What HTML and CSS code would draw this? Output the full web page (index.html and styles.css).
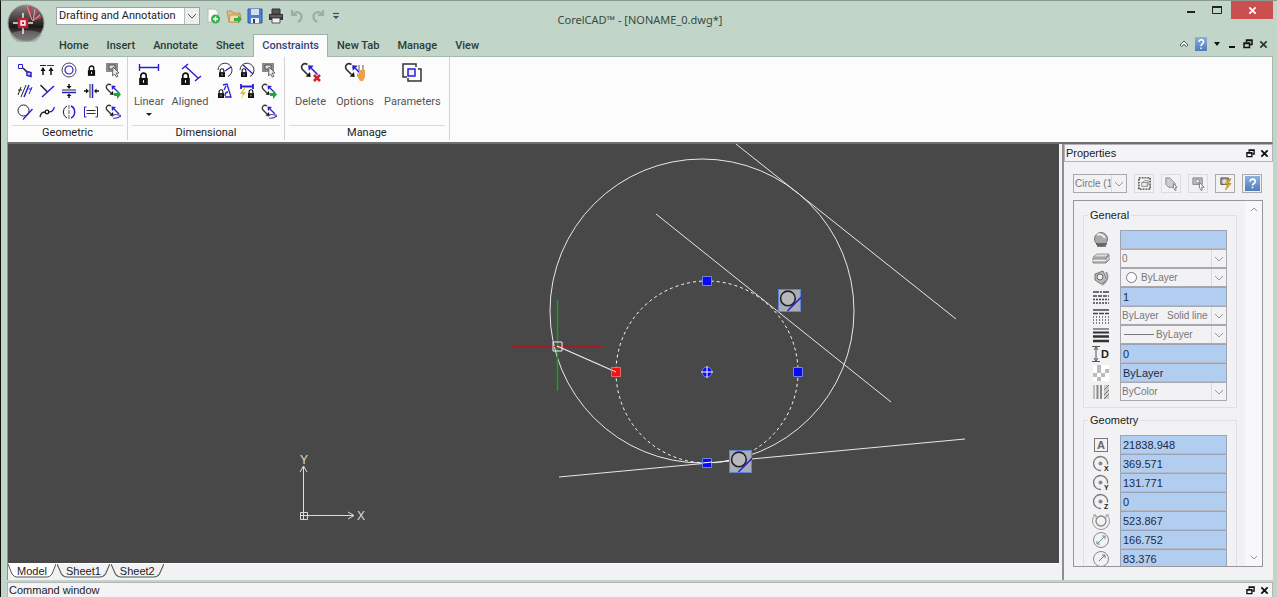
FILE: index.html
```
<!DOCTYPE html>
<html lang="en">
<head>
  <meta charset="UTF-8">
  <meta name="viewport" content="width=device-width, initial-scale=1.0">
  <title>CorelCAD</title>
  <link rel="stylesheet" href="styles.css">
</head>
<body>
  <!-- shared icon parts -->
  <svg class="defs" width="0" height="0">
    <defs>
      <linearGradient id="ball" x1="0" y1="0" x2="0" y2="1">
        <stop offset="0" stop-color="#8b8585"/>
        <stop offset="0.45" stop-color="#3a3434"/>
        <stop offset="0.6" stop-color="#1c1919"/>
        <stop offset="1" stop-color="#777272"/>
      </linearGradient>
      <linearGradient id="help" x1="0" y1="0" x2="0" y2="1">
        <stop offset="0" stop-color="#8fb0de"/>
        <stop offset="1" stop-color="#4f7bbd"/>
      </linearGradient>
      <symbol id="lock" viewBox="0 0 10 12">
        <path d="M2.5 6V3.5a2.5 2.5 0 0 1 5 0V6" fill="none" stroke="#111" stroke-width="1.5"/>
        <path d="M1 5.5h8V12H1z" fill="#111"/>
        <path d="M4.5 7.5h1v2.5h-1z" fill="#fff"/>
      </symbol>
      <symbol id="chain" viewBox="0 0 16 16">
        <path d="M6 2C3 0 0 3 2 6l4 4" fill="none" stroke="#333" stroke-width="1.3"/>
        <path d="M8.500 12L4.500 11.500 8 8z" fill="#111"/>
        <path d="M6.500 2.500l4.500 .5L7 7z" fill="#2a1fd0"/>
        <path d="M9 5l5 5" stroke="#2a1fd0" stroke-width="1.3"/>
      </symbol>
      <symbol id="hide" viewBox="0 0 16 16">
        <path d="M1 1h12v9H1z" fill="#8a8a8a"/>
        <path d="M4 3h6v4H4z" fill="#ddd" stroke="#555"/>
        <path d="M8 5l6 6-3 .2 2 3-1.500 1-2-3.200-2 2z" fill="#eee" stroke="#666"/>
      </symbol>
      <symbol id="show" viewBox="0 0 16 16">
        <use href="#chain"/>
        <path d="M9 10h3V7l4 4.500-4 4.500v-3H9z" fill="#21a53c"/>
      </symbol>
      <symbol id="hideall" viewBox="0 0 16 16">
        <use href="#chain"/>
        <path d="M7 12.500c2-3 5-2 9-1M8 14c3 1 6-1 8-2" fill="none" stroke="#4a44a8" stroke-width="1.200"/>
      </symbol>
      <symbol id="restore" viewBox="0 0 10 10">
        <path d="M3.500 3V1h5.500v4.500H7M3 1.500h6" fill="none" stroke="#111" stroke-width="1.500"/>
        <path d="M1 4h5.500v4.500H1zM1 4.500h5" fill="none" stroke="#111" stroke-width="1.500"/>
      </symbol>
      <symbol id="close" viewBox="0 0 10 10">
        <path d="M1.500 1.500l7 7M8.500 1.500l-7 7" stroke="currentColor" stroke-width="2"/>
      </symbol>
      <symbol id="orbit" viewBox="0 0 18 18">
        <path d="M15.500 9.500A7 7 0 1 0 9 15.500" fill="none" stroke="#777" stroke-width="1.300"/>
        <circle cx="8.500" cy="8.500" r="2" fill="#888"/>
      </symbol>
      <symbol id="tangent" viewBox="0 0 22 22">
        <path d="M.5.5h21v21H.5z" fill="#a9adba" stroke="#5f86d0"/>
        <circle cx="9.500" cy="9" r="7" fill="#b9b9bd" stroke="#222" stroke-width="1.500"/>
        <path d="M9 21L22 8" stroke="#2a25c8" stroke-width="1.500"/>
      </symbol>
    </defs>
  </svg>

  <div class="window">
    <header class="titlebar">
      <button class="app-button" aria-label="Application menu">
        <svg width="38" height="38" viewBox="0 0 38 38">
          <circle cx="19" cy="19" r="18" fill="url(#ball)" stroke="#8c9690"/>
          <path d="M19 2l4 12 2-11zM26 4l1 11 4-10zM33 9l-7 8 8-3z" fill="#c2455a"/>
          <path d="M20 2l5 14M28 5l-2 12M33 11l-8 6" stroke="#dfa0a8"/>
          <path d="M3 30a18 18 0 0 0 32 0c-9-5-22-5-32 0" fill="#888" opacity=".5"/>
          <path d="M6 19h20M16 9v21" stroke="#eee" stroke-width="1.500"/>
          <path d="M12 15h8v8h-8z" fill="#eee" stroke="#c01f32" stroke-width="2.500"/>
          <path d="M15 18h2v2h-2z" fill="#c01f32"/>
        </svg>
      </button>
      <div class="quick-access">
        <span class="workspace-select">
          <select aria-label="Workspace"><option>Drafting and Annotation</option></select>
        </span>
        <button aria-label="New"><svg width="16" height="16" viewBox="0 0 16 16"><path d="M3 1h7l3 3v10H3z" fill="#fafafa" stroke="#bbb"/><circle cx="10.500" cy="11" r="4.500" fill="#35b04a"/><path d="M10.500 8.500v5M8 11h5" stroke="#fff" stroke-width="1.500"/></svg></button>
        <button aria-label="Open"><svg width="16" height="16" viewBox="0 0 16 16"><path d="M1 3h5l1 2h7v9H3z" fill="#e2bd7c" stroke="#c09450"/><path d="M4 7h11l-2 7H3z" fill="#f3dcac" stroke="#c09450"/><path d="M8 10h4V7l4 4-4 4v-2H8z" fill="#35b04a"/></svg></button>
        <button aria-label="Save"><svg width="16" height="16" viewBox="0 0 16 16"><path d="M1 1h14v14H1z" fill="#4c7fd0" stroke="#2c58a0"/><path d="M4 1h8v6H4z" fill="#cfe0f6"/><path d="M4 10h8v5H4z" fill="#eee"/><path d="M6 11h2v4H6z" fill="#345"/></svg></button>
        <button aria-label="Print"><svg width="16" height="16" viewBox="0 0 16 16"><path d="M4 1h8v5H4z" fill="#555" stroke="#333"/><path d="M1 6h14v6H1z" fill="#333"/><path d="M4 10h8v5H4z" fill="#f2f2f2" stroke="#555"/><path d="M2 8h12" stroke="#888"/></svg></button>
        <button aria-label="Undo" disabled><svg width="16" height="16" viewBox="0 0 16 16"><path d="M3 2v5h5M3.500 6.500C8 2 13 5 12.500 9c0 3-2 4-3.500 5" fill="none" stroke="#9fada4" stroke-width="2.200"/></svg></button>
        <button aria-label="Redo" disabled><svg width="16" height="16" viewBox="0 0 16 16"><path d="M13 2v5H8M12.500 6.500C8 2 3 5 3.500 9c0 3 2 4 3.500 5" fill="none" stroke="#9fada4" stroke-width="2.200"/></svg></button>
        <button class="more" aria-label="Customize"><svg width="8" height="8" viewBox="0 0 8 8"><path d="M1 1.500h6" stroke="#34506a" stroke-width="1.200"/><path d="M1 4h6L4 7z" fill="#34506a"/></svg></button>
      </div>
      <h1>CorelCAD™ - [NONAME_0.dwg*]</h1>
      <div class="window-buttons">
        <button aria-label="Minimize"><svg width="10" height="10" viewBox="0 0 10 10"><path d="M1 7h8" stroke="#222" stroke-width="2"/></svg></button>
        <button aria-label="Maximize"><svg width="10" height="10" viewBox="0 0 10 10"><path d="M.5 1.500h9v7h-9z" fill="none" stroke="#222"/><path d="M0 2h10" stroke="#222" stroke-width="2"/></svg></button>
        <button class="close" aria-label="Close"><svg width="9" height="9"><use href="#close"/></svg></button>
      </div>
    </header>

    <nav class="tabs">
      <button>Home</button>
      <button>Insert</button>
      <button>Annotate</button>
      <button>Sheet</button>
      <button class="active">Constraints</button>
      <button>New Tab</button>
      <button>Manage</button>
      <button>View</button>
      <div class="doc-buttons">
        <button aria-label="Collapse ribbon"><svg width="10" height="10" viewBox="0 0 10 10"><path d="M1 6l4-4 4 4-1.500 1.500L5 5.500 2.500 7.500z" fill="#fff" stroke="#555"/></svg></button>
        <button aria-label="Help"><svg width="12" height="14" viewBox="0 0 12 14"><path d="M0 0h12v14H0z" fill="url(#help)"/><path d="M4 5c0-3 4.500-3 4.500 0 0 2-2.500 1.800-2.500 4M6 10.500V12" fill="none" stroke="#fff" stroke-width="1.500"/></svg></button>
        <button aria-label="Help menu"><svg width="8" height="8" viewBox="0 0 8 8"><path d="M1 2h6L4 6z" fill="#111"/></svg></button>
        <button aria-label="Minimize document"><svg width="10" height="10" viewBox="0 0 10 10"><path d="M2 8h6" stroke="#111" stroke-width="2"/></svg></button>
        <button aria-label="Restore document"><svg width="10" height="10"><use href="#restore"/></svg></button>
        <button aria-label="Close document"><svg width="9" height="9"><use href="#close"/></svg></button>
      </div>
    </nav>

    <section class="ribbon">
      <div class="group">
        <div class="tools geometric">
          <button aria-label="Coincident"><svg viewBox="0 0 16 16"><path d="M1.500 2.500h4v4h-4z" fill="none" stroke="#2a1fd0"/><path d="M6 6l5 5" stroke="#222" stroke-width="1.500"/><path d="M10 9.500l4 1v4l-4-1z" fill="#b9c6ff" stroke="#2a1fd0" stroke-width="1.500"/></svg></button>
          <button aria-label="Collinear"><svg viewBox="0 0 16 16"><path d="M1 3.500h6" stroke="#222"/><path d="M8 3.500h7" stroke="#2a1fd0"/><path d="M4 13V6M12 13V6" stroke="#111" stroke-width="1.500"/><path d="M1.500 9L4 5l2.500 4zM9.500 9L12 5l2.500 4z" fill="#111"/></svg></button>
          <button aria-label="Concentric"><svg viewBox="0 0 16 16"><circle cx="8" cy="8" r="7" fill="none" stroke="#445"/><circle cx="8" cy="8" r="4" fill="none" stroke="#2a1fd0" stroke-width="1.200"/></svg></button>
          <button aria-label="Fix"><svg viewBox="0 0 16 16"><use href="#lock" x="4" y="3" width="9" height="11"/></svg></button>
          <button aria-label="Hide geometric"><svg><use href="#hide"/></svg></button>
          <button aria-label="Parallel"><svg viewBox="0 0 16 16"><path d="M4 14l5-12" stroke="#222"/><path d="M7 14l5-12" stroke="#2a1fd0" stroke-width="1.500"/><path d="M1 12l3-8M1 7h4" stroke="#222"/><path d="M12 11l3-7M11.500 6H15" stroke="#2a1fd0"/></svg></button>
          <button aria-label="Perpendicular"><svg viewBox="0 0 16 16"><path d="M1.500 2l7 7" stroke="#222" stroke-width="1.500"/><path d="M3 14L15 3" stroke="#2a1fd0" stroke-width="1.500"/></svg></button>
          <button aria-label="Horizontal"><svg viewBox="0 0 16 16"><path d="M1 7h14" stroke="#222"/><path d="M1 9.500h14" stroke="#2a1fd0" stroke-width="1.500"/><path d="M8 1v3M8 12v3" stroke="#111" stroke-width="1.500"/><path d="M5.500 3h5L8 6zM5.500 13h5L8 10.500z" fill="#111"/></svg></button>
          <button aria-label="Vertical"><svg viewBox="0 0 16 16"><path d="M7 1v14" stroke="#222"/><path d="M9.500 1v14" stroke="#2a1fd0" stroke-width="1.500"/><path d="M1 8h3M12 8h4" stroke="#111" stroke-width="1.500"/><path d="M3 5.500v5L6 8zM13.500 5.500v5L11 8z" fill="#111"/></svg></button>
          <button aria-label="Show geometric"><svg><use href="#show"/></svg></button>
          <button aria-label="Tangent"><svg viewBox="0 0 16 16"><circle cx="6.500" cy="6.500" r="5.500" fill="none" stroke="#222"/><path d="M6 15.500L15.500 5" stroke="#2a1fd0" stroke-width="1.300"/></svg></button>
          <button aria-label="Smooth"><svg viewBox="0 0 16 16"><path d="M1 13c1-5 3-5 6-5" fill="none" stroke="#222" stroke-width="1.300"/><path d="M8 8c4 0 6 0 7.500-5" fill="none" stroke="#2a1fd0" stroke-width="1.300"/><circle cx="8" cy="8" r="1.800" fill="#fff" stroke="#111" stroke-width="1.300"/></svg></button>
          <button aria-label="Symmetric"><svg viewBox="0 0 16 16"><path d="M6 2a6 6.500 0 0 0 0 12" fill="none" stroke="#222"/><path d="M10 2a6 6.500 0 0 1 0 12" fill="none" stroke="#2a1fd0" stroke-width="1.500"/><path d="M8 1v14" stroke="#667" stroke-dasharray="4 1"/></svg></button>
          <button aria-label="Equal"><svg viewBox="0 0 16 16"><path d="M3.500 3H1.500v10h2M12.500 3h2v10h-2" fill="none" stroke="#2a1fd0"/><path d="M3.500 6.500h9" stroke="#222"/><path d="M3.500 9.500h9" stroke="#2a1fd0"/></svg></button>
          <button aria-label="Hide all geometric"><svg><use href="#hideall"/></svg></button>
        </div>
        <h2>Geometric</h2>
      </div>

      <div class="group">
        <div class="tools dimensional">
          <button class="big linear">
            <svg width="24" height="24" viewBox="0 0 24 24"><path d="M2.500 3v7M21.500 3v7M3 6.500h18" fill="none" stroke="#2a1fd0" stroke-width="1.400"/><use href="#lock" x="1" y="11" width="11" height="13"/></svg>
            Linear
            <svg class="drop" width="6" height="4" viewBox="0 0 6 4"><path d="M0 0h6L3 3z" fill="#222"/></svg>
          </button>
          <button class="big aligned">
            <svg width="24" height="24" viewBox="0 0 24 24"><path d="M4 8l6-5M17 20l6-5M7 5l13 12" fill="none" stroke="#2a1fd0" stroke-width="1.400"/><use href="#lock" x="2" y="11" width="11" height="13"/></svg>
            Aligned
          </button>
          <div class="mini-grid">
            <button aria-label="Radius"><svg viewBox="0 0 16 16"><path d="M1 8a7 7 0 1 1 10 6.500" fill="none" stroke="#333"/><path d="M8 9l6-4" stroke="#2a1fd0" stroke-width="1.300"/><use href="#lock" x="1" y="6" width="8" height="9"/></svg></button>
            <button aria-label="Diameter"><svg viewBox="0 0 16 16"><path d="M1 8a7 7 0 1 1 10 6.500" fill="none" stroke="#333"/><path d="M4 3l10 9" stroke="#2a1fd0" stroke-width="1.300"/><use href="#lock" x="1" y="6" width="8" height="9"/></svg></button>
            <button aria-label="Hide dimensional"><svg><use href="#hide"/></svg></button>
            <button aria-label="Angular"><svg viewBox="0 0 16 16"><path d="M6 2l4-1 4 13H8M9 3l-2 4M11 9c-2 0-3 2-3 4" fill="none" stroke="#2a1fd0" stroke-width="1.300"/><use href="#lock" x="0" y="6" width="8" height="9"/></svg></button>
            <button aria-label="Convert"><svg viewBox="0 0 16 16"><path d="M2 1v5M14 1v5M2 3.500h12" stroke="#2a1fd0" stroke-width="1.800"/><path d="M5 5l-4 6h3l-2 5 5-7H4l2-4z" fill="#e4c21a"/><use href="#lock" x="8" y="6" width="8" height="9"/></svg></button>
            <button aria-label="Show dimensional"><svg><use href="#show"/></svg></button>
            <button class="last" aria-label="Hide all dimensional"><svg><use href="#hideall"/></svg></button>
          </div>
        </div>
        <h2>Dimensional</h2>
      </div>

      <div class="group">
        <div class="tools manage">
          <button class="big">
            <svg width="24" height="24" viewBox="0 0 24 24"><use href="#chain" x="1" y="1" width="20" height="20"/><path d="M15 14l6 6M21 14l-6 6" stroke="#d81e2a" stroke-width="2.500"/></svg>
            Delete
          </button>
          <button class="big">
            <svg width="24" height="24" viewBox="0 0 24 24"><use href="#chain" x="1" y="1" width="20" height="20"/><path d="M16 4v5M20 4v5" stroke="#aaa" stroke-width="2"/><path d="M14 12l2 1v-4h6v7l-2 4h-3l-3-5z" fill="#eaa14a"/></svg>
            Options
          </button>
          <button class="big">
            <svg width="24" height="24" viewBox="0 0 24 24"><path d="M7 16H3V3h13v3M10 20h11V8h-3M8 17v3h3" fill="none" stroke="#333" stroke-width="1.500"/><path d="M8 8h7v7H8z" fill="#eef" stroke="#2a1fd0" stroke-width="1.500"/></svg>
            Parameters
          </button>
        </div>
        <h2>Manage</h2>
      </div>
    </section>

    <main class="workspace">
      <div class="editor">
        <svg class="drawing" role="img" aria-label="Drawing">
          <g fill="none" stroke="#e8e8e8">
            <circle cx="694" cy="167" r="152"/>
            <circle cx="699" cy="228" r="91" stroke="#fff" stroke-dasharray="3 3"/>
            <path d="M728 0l220 175M648 70l235 188M551 333l406-38"/>
          </g>
          <path d="M504 202.500h92" stroke="#a01c22"/>
          <path d="M549.500 156v91" stroke="#1f9a27" stroke-width="1.500"/>
          <path d="M549 202l59 26" stroke="#eee" stroke-width="1.300"/>
          <path d="M545 198h9v9h-9z" fill="none" stroke="#eee"/>
          <g fill="#0a0af0" stroke="#6d83e6">
            <path d="M694.500 132.500h9v9h-9zM785.500 223.500h9v9h-9zM694.500 314.500h9v9h-9z"/>
            <path d="M603.500 223.500h9v9h-9z" fill="#f01414" stroke="#e66"/>
            <circle cx="699" cy="228" r="5"/>
          </g>
          <path d="M693 228h12M699 222v12M695 319l9-1" stroke="#fff"/>
          <path d="M604 226l4 2" stroke="#eee"/>
          <use href="#tangent" x="770" y="145" width="23" height="23"/>
          <use href="#tangent" x="721" y="306" width="23" height="23"/>
          <g fill="none" stroke="#ddd">
            <path d="M292.500 368.500h7v7h-7zM292 371.500h53M295.500 375v-52"/>
            <path d="M340 368l6 3.500-6 3.500M292 328l3.500-6 3.500 6"/>
          </g>
          <text x="292" y="320">Y</text>
          <text x="349" y="376">X</text>
        </svg>
        <div class="sheets">
          <button class="current">
            <svg viewBox="0 0 48 14" preserveAspectRatio="none"><path d="M0 0l4 10q2 3 5 3h30q3 0 5-3l4-10"/></svg>
            <span>Model</span>
          </button>
          <button>
            <svg viewBox="0 0 48 14" preserveAspectRatio="none"><path d="M0 0l4 10q2 3 5 3h30q3 0 5-3l4-10"/></svg>
            <span>Sheet1</span>
          </button>
          <button>
            <svg viewBox="0 0 48 14" preserveAspectRatio="none"><path d="M0 0l4 10q2 3 5 3h30q3 0 5-3l4-10"/></svg>
            <span>Sheet2</span>
          </button>
        </div>
      </div>

      <aside class="properties">
        <div class="panel-title">
          <h2>Properties</h2>
          <button aria-label="Float panel"><svg width="9" height="9"><use href="#restore"/></svg></button>
          <button aria-label="Close panel"><svg width="9" height="9"><use href="#close"/></svg></button>
        </div>
        <div class="panel-tools">
          <span class="combo"><select aria-label="Selection" disabled><option>Circle (1)</option></select></span>
          <button class="flat" aria-label="Select all"><svg viewBox="0 0 16 16"><path d="M2 2h12v12H2z" fill="none" stroke="#444" stroke-width="1.500" stroke-dasharray="2 1"/><path d="M5 7h6v4H5zM6 7l2-2h4v4l-1 2" fill="none" stroke="#888"/></svg></button>
          <button class="flat" aria-label="Select entities"><svg viewBox="0 0 16 16"><path d="M2 2h4l6 6v4H5L2 9z" fill="#ccc" stroke="#888"/><path d="M10 8l4 4h-2l1 3-1 .5-2-3z" fill="#fff" stroke="#777"/></svg></button>
          <button class="flat" aria-label="Quick select"><svg viewBox="0 0 16 16"><path d="M2 2h10v7H2z" fill="#bbb" stroke="#888"/><circle cx="7" cy="5.500" r="2" fill="#eee" stroke="#888"/><path d="M9 7l5 5h-3l1 3-1 .5-2-3z" fill="#fff" stroke="#777"/></svg></button>
          <button aria-label="Smart select"><svg viewBox="0 0 16 16"><path d="M3 2h8v7H3z" fill="#999" stroke="#555"/><circle cx="7" cy="6" r="2.500" fill="#ddd"/><path d="M12 3L7 9h3l-2 6 6-7h-3l3-5z" fill="#e2b21c" stroke="#8a6c10" stroke-width=".5"/></svg></button>
          <button class="help" aria-label="Panel help"><svg viewBox="0 0 16 16"><path d="M0 0h16v16H0z" fill="url(#help)"/><path d="M5.500 6c0-4 5.500-3 5.500 0 0 2-3 2-3 4M8 11.500V13" fill="none" stroke="#fff" stroke-width="1.800"/></svg></button>
        </div>

        <div class="sheet-box">
          <form class="fields">
            <fieldset>
              <legend>General</legend>
              <div class="row"><label for="hyperlink" aria-label="Hyperlink"><svg viewBox="0 0 18 18"><circle cx="9" cy="8" r="6.500" fill="#aaa" stroke="#777"/><path d="M5 4c3-2 6 0 8 3" fill="none" stroke="#eee" stroke-width="2"/><path d="M4 13h4M8 13h7M5 15h9" stroke="#555" stroke-width="1.500"/></svg></label><input id="hyperlink" type="text"></div>
              <div class="row"><label for="layer" aria-label="Layer"><svg viewBox="0 0 18 18"><path d="M1 7l4-3h12l-3 3z" fill="#ddd" stroke="#999"/><path d="M1 8h13v5H1zM14 8l3-3v5l-3 3" fill="#bbb" stroke="#888"/><path d="M1 10.500h13l3-3" fill="none" stroke="#eee"/></svg></label><span class="combo"><select id="layer" disabled><option>0</option></select></span></div>
              <div class="row"><label for="color" aria-label="Color"><svg viewBox="0 0 18 18"><path d="M3 5l8-3 4 9-6 4-6-4z" fill="#bbb" stroke="#777"/><circle cx="8" cy="8" r="3" fill="#eee" stroke="#666"/><path d="M14 3c3 5 1 10-4 13" fill="none" stroke="#999" stroke-width="2"/></svg></label><span class="combo"><i class="swatch"></i><select id="color" disabled><option>ByLayer</option></select></span></div>
              <div class="row"><label for="scale" aria-label="Line scale"><svg viewBox="0 0 18 18"><path d="M1 4h16" stroke="#444" stroke-width="1.600" stroke-dasharray="6 1 2 1"/><path d="M1 8h16" stroke="#444" stroke-width="1.600" stroke-dasharray="4 1"/><path d="M1 11.500h16M1 15h16" stroke="#444" stroke-width="1.500" stroke-dasharray="2 1"/></svg></label><input id="scale" type="text" value="1"></div>
              <div class="row"><label for="style" aria-label="Line style"><svg viewBox="0 0 18 18"><path d="M1 3h16" stroke="#444" stroke-width="1.500"/><path d="M1 6.500h16" stroke="#444" stroke-width="1.600" stroke-dasharray="5 1"/><path d="M1 10h16M1 13h16M1 16h16" stroke="#555" stroke-width="1.400" stroke-dasharray="1 2"/></svg></label><span class="combo"><select id="style" disabled><option>ByLayer &nbsp; Solid line</option></select></span></div>
              <div class="row"><label for="weight" aria-label="Line weight"><svg viewBox="0 0 18 18"><path d="M1 3h16" stroke="#333" stroke-width="1"/><path d="M1 6.500h16" stroke="#333" stroke-width="2"/><path d="M1 10.500h16M1 15h16" stroke="#333" stroke-width="2.500"/></svg></label><span class="combo"><i class="stroke"></i><select id="weight" disabled><option>ByLayer</option></select></span></div>
              <div class="row"><label for="thickness" class="thickness"><svg viewBox="0 0 8 18"><path d="M0 1.500h8M0 16.500h8M4 2v14" stroke="#555"/><path d="M2 5l2-3 2 3M2 13l2 3 2-3" fill="none" stroke="#555"/></svg>D</label><input id="thickness" type="text" value="0"></div>
              <div class="row"><label for="transparency" aria-label="Transparency"><svg viewBox="0 0 18 18"><path d="M1 1h16v16H1z" fill="#fff"/><path d="M5 1h4v4H5zM13 5h4v4h-4zM1 9h4v4H1zM9 9h4v4H9zM5 5h4v4H5zM5 13h4v4H5z" fill="#bbb"/></svg></label><input id="transparency" type="text" value="ByLayer"></div>
              <div class="row"><label for="plot" aria-label="Print style"><svg viewBox="0 0 18 18"><path d="M2 2v14" stroke="#888"/><path d="M5.500 2v14" stroke="#888" stroke-width="2"/><path d="M9 2v14" stroke="#888" stroke-width="2"/><path d="M12 2h5v14h-5z" fill="#ccc"/><path d="M12 7l5-5M12 12l5-5M12 16l5-5" stroke="#777"/></svg></label><span class="combo"><select id="plot" disabled><option>ByColor</option></select></span></div>
            </fieldset>
            <fieldset>
              <legend>Geometry</legend>
              <div class="row"><label for="area" class="area"><span>A</span></label><input id="area" type="text" value="21838.948"></div>
              <div class="row"><label for="cx" class="axis"><svg><use href="#orbit"/></svg><b>X</b></label><input id="cx" type="text" value="369.571"></div>
              <div class="row"><label for="cy" class="axis"><svg><use href="#orbit"/></svg><b>Y</b></label><input id="cy" type="text" value="131.771"></div>
              <div class="row"><label for="cz" class="axis"><svg><use href="#orbit"/></svg><b>Z</b></label><input id="cz" type="text" value="0"></div>
              <div class="row"><label for="circumference" aria-label="Circumference"><svg viewBox="0 0 18 18"><circle cx="9" cy="9" r="5" fill="none" stroke="#888" stroke-width="1.300"/><path d="M3 3a8.500 8.500 0 1 0 12 0M1 3h3v3M17 3h-3v3" fill="none" stroke="#999"/></svg></label><input id="circumference" type="text" value="523.867"></div>
              <div class="row"><label for="diameter" aria-label="Diameter value"><svg viewBox="0 0 18 18"><circle cx="9" cy="9" r="7.500" fill="none" stroke="#888"/><path d="M5 13l8-8M5 10v3h3M10 5h3v3" fill="none" stroke="#6f8f84"/></svg></label><input id="diameter" type="text" value="166.752"></div>
              <div class="row"><label for="radius" aria-label="Radius value"><svg viewBox="0 0 18 18"><circle cx="9" cy="9" r="7.500" fill="none" stroke="#888"/><path d="M7 11l6-6M10 5h3v3" fill="none" stroke="#777"/></svg></label><input id="radius" type="text" value="83.376"></div>
            </fieldset>
          </form>
          <div class="scroll">
            <svg width="8" height="6" viewBox="0 0 8 6"><path d="M1 5l3-3 3 3"/></svg>
            <svg width="8" height="6" viewBox="0 0 8 6"><path d="M1 1l3 3 3-3"/></svg>
          </div>
        </div>
      </aside>
    </main>

    <footer class="panel-title command">
      <h2>Command window</h2>
      <button aria-label="Float command window"><svg width="9" height="9"><use href="#restore"/></svg></button>
      <button aria-label="Close command window"><svg width="9" height="9"><use href="#close"/></svg></button>
    </footer>
  </div>
</body>
</html>
```
FILE: styles.css
```
* {
  box-sizing: border-box;
}
body {
  margin: 0;
  font-family: "Liberation Sans", Arial, sans-serif;
  font-size: 11px;
  line-height: 14px;
  color: #222;
}
button {
  display: flex;
  align-items: center;
  justify-content: center;
  padding: 0;
  border: none;
  background: none;
  color: inherit;
  font: inherit;
}
h1, h2 {
  margin: 0;
  font-size: 11px;
  font-weight: normal;
}
input, select {
  min-width: 0;
  font: inherit;
}
select {
  appearance: none;
  flex: 1;
  padding: 0;
  border: none;
  background: none;
  color: inherit;
  opacity: 1;
}
svg {
  flex: none;
}
.defs {
  position: absolute;
}
.window {
  display: flex;
  flex-direction: column;
  height: 100vh;
  overflow: hidden;
  padding: 0 4px 0 6px;
  border-top: 1px solid #8a9a90;
  border-left: 1px solid #111;
  background: #c1d6c9;
}
.titlebar, .tabs, .ribbon {
  font-family: Roboto, "Noto Sans", sans-serif;
}

/* title bar */
.titlebar {
  display: grid;
  grid-template-columns: 1fr auto 1fr;
  height: 33px;
  position: relative;
}
.app-button {
  position: absolute;
  left: 0;
  top: 3px;
}
.quick-access {
  display: flex;
  align-items: center;
  gap: 5px;
  height: 29px;
  padding-left: 49px;
}
.quick-access button {
  width: 16px;
}
.quick-access .more {
  width: 10px;
}
.workspace-select {
  display: flex;
  width: 144px;
  height: 18px;
  padding-left: 2px;
  border: 1px solid #9aa39d;
  background: #fff;
  color: #222;
}
.workspace-select::after {
  content: "";
  width: 14px;
  border-left: 1px solid #bbb;
  background: linear-gradient(45deg, transparent 40%, #555 40% 60%, transparent 60%) 3px 6px / 4px 4px no-repeat,
    linear-gradient(-45deg, transparent 40%, #555 40% 60%, transparent 60%) 7px 6px / 4px 4px no-repeat,
    #eee;
}
.titlebar h1 {
  padding-top: 12px;
  font-family: "Noto Sans", sans-serif;
  color: #3b4841;
}
.window-buttons {
  display: flex;
  justify-content: flex-end;
}
.window-buttons button {
  width: 26px;
  height: 18px;
}
.window-buttons .close {
  width: 42px;
  margin-left: 1px;
  background: #c9504f;
  color: #fff;
}

/* ribbon */
.tabs {
  display: flex;
  height: 22px;
  padding-left: 43px;
  color: #2f3a34;
  font-weight: 500;
}
.tabs > button {
  height: 23px;
  padding: 0 8px;
  border: 1px solid transparent;
}
.tabs .active {
  z-index: 1;
  border-color: #9fb0a6;
  border-bottom: none;
  background: #fcfcfd;
  color: #34427c;
}
.doc-buttons {
  display: flex;
  gap: 6px;
  margin-left: auto;
  padding-right: 5px;
  height: 20px;
}
.ribbon {
  display: flex;
  height: 88px;
  border: 1px solid #a9b8af;
  border-bottom: 2px solid #6e6e72;
  background: #fcfcfd;
}
.group {
  display: flex;
  flex-direction: column;
  margin: 0 0 2px;
  border-right: 1px solid #d3d3d6;
}
.tools {
  display: flex;
  flex: 1;
  padding: 2px 3px 0 6px;
  color: #555;
}
.tools svg {
  width: 16px;
  height: 16px;
}
.group h2 {
  height: 15px;
  margin: 0 4px;
  border-top: 1px solid #d9d9dc;
  text-align: center;
  color: #222;
}
.geometric {
  display: grid;
  grid-template-columns: repeat(5, 22px);
  grid-template-rows: repeat(3, 21px);
}
.big {
  flex-direction: column;
  justify-content: flex-start;
  gap: 10px;
  padding: 2px 0 0;
}
.tools .big > svg {
  width: 24px;
  height: 24px;
}
.tools .big > .drop {
  width: 6px;
  height: 4px;
  margin-top: -6px;
}
.dimensional {
  width: 156px;
  padding-left: 0;
}
.linear {
  width: 42px;
}
.aligned {
  width: 40px;
}
.mini-grid {
  display: grid;
  grid-template-columns: repeat(3, 22px);
  grid-template-rows: repeat(3, 21px);
  margin-left: 4px;
}
.mini-grid .last {
  grid-column: 3;
}
.manage {
  gap: 10px;
  padding: 2px 8px 0 10px;
}

/* workspace */
.workspace {
  display: flex;
  flex: 1;
  min-height: 0;
  background: #f2f2f4;
}
.editor {
  display: flex;
  flex: 1;
  flex-direction: column;
  border-left: 1px solid #8d8d90;
}
.drawing {
  flex: 1;
  width: 100%;
  min-height: 0;
  background: #484848;
}
.drawing text {
  fill: #ddd;
  font-size: 12px;
}
.sheets {
  display: flex;
  height: 17px;
  gap: 1px;
  border-top: 1px solid #fff;
}
.sheets button {
  position: relative;
  height: 14px;
  padding: 0 9px;
}
.sheets svg {
  position: absolute;
  inset: 0;
  width: 100%;
  height: 100%;
  fill: #f2f2f4;
  stroke: #555;
}
.sheets span {
  position: relative;
}
.sheets .current svg {
  fill: #fff;
}
.panel-title {
  display: flex;
  align-items: center;
  gap: 5px;
  height: 18px;
  padding: 0 3px 0 1px;
  border: 1px solid #b4b4b8;
  background: #f4f4f6;
}
.panel-title h2 {
  flex: 1;
}
.panel-title button {
  color: #111;
}

/* properties */
.properties {
  display: flex;
  flex-direction: column;
  width: 211px;
  margin-left: 3px;
  padding-bottom: 13px;
  border-left: 2px solid #8d8d90;
}
.panel-tools {
  display: flex;
  gap: 7px;
  margin: 12px 10px 7px 9px;
}
.panel-tools .combo {
  flex: none;
  width: 54px;
}
.panel-tools button {
  width: 20px;
  height: 19px;
  border: 1px solid #aaa;
}
.panel-tools button.flat {
  border-color: #dcdce0;
}
.panel-tools svg {
  width: 15px;
  height: 15px;
}
.sheet-box {
  display: flex;
  flex: 1;
  min-height: 0;
  margin: 0 10px 0 9px;
  border: 1px solid #96969c;
}
.fields {
  flex: 1;
  overflow: hidden;
  padding: 7px 8px 0 9px;
}
fieldset {
  min-width: 0;
  margin: 0 0 5px;
  padding: 8px 9px 6px 8px;
  border: 1px solid #e0e0e4;
}
legend {
  margin-left: -4px;
  padding: 0 2px;
}
.row {
  display: flex;
  height: 19px;
}
.row label {
  display: flex;
  align-items: center;
  width: 28px;
}
.row svg {
  width: 18px;
  height: 18px;
}
.row input {
  flex: 1;
  padding: 0 2px;
  border: 1px solid #9aa4b4;
  border-bottom-color: #b8b8c4;
  background: #b1cdf0;
  color: #1d2a44;
}
.combo {
  display: flex;
  flex: 1;
  align-items: center;
  height: 19px;
  min-width: 0;
  padding-left: 1px;
  border: 1px solid #a8a8ae;
  color: #777;
  font-size: 10px;
}
.combo::after {
  content: "";
  width: 14px;
  height: 17px;
  border-left: 1px solid #dcdce0;
  background: linear-gradient(45deg, transparent 40%, #999 40% 60%, transparent 60%) 3px 7px / 4px 4px no-repeat,
    linear-gradient(-45deg, transparent 40%, #999 40% 60%, transparent 60%) 7px 7px / 4px 4px no-repeat;
}
.swatch {
  width: 11px;
  height: 11px;
  margin: 0 4px;
  border: 1px solid #777;
  border-radius: 50%;
  background: #fff;
}
.stroke {
  width: 30px;
  margin: 0 2px;
  border-top: 1px solid #777;
}
.row .thickness {
  gap: 1px;
  font-weight: bold;
}
.row .thickness svg {
  width: 8px;
}
.area span {
  width: 14px;
  height: 14px;
  margin-left: 2px;
  border: 1px solid #777;
  line-height: 12px;
  font-weight: bold;
  text-align: center;
  color: #666;
}
.axis b {
  align-self: flex-end;
  margin-left: -6px;
  font-size: 7px;
  line-height: 8px;
}
.scroll {
  display: flex;
  flex-direction: column;
  justify-content: space-between;
  align-items: center;
  width: 17px;
  padding: 5px 0;
  background: #f8f8fa;
}
.scroll path {
  fill: none;
  stroke: #999;
}
.command {
  height: 15px;
  margin-top: 2px;
  border-bottom: none;
}
```
